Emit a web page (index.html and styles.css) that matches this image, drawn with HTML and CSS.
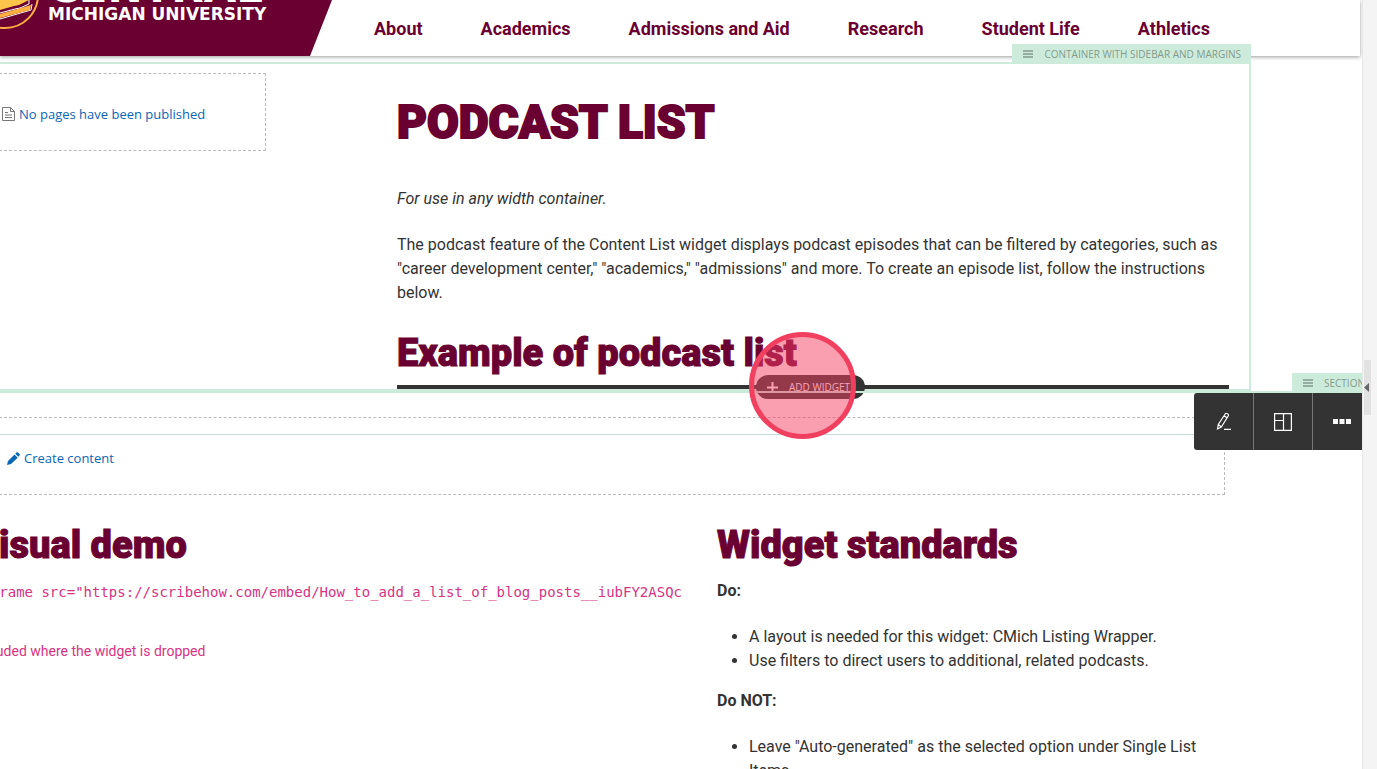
FILE: index.html
```html
<!DOCTYPE html>
<html lang="en">
<head>
<meta charset="UTF-8">
<meta name="viewport" content="width=device-width, initial-scale=1.0">
<title>Podcast List</title>
<link rel="stylesheet" href="styles.css">
</head>
<body>
<div class="page">
    <header class="site-header">
        <a class="brand" href="#">
            <svg class="seal" width="42" height="80" viewBox="0 0 42 80" aria-hidden="true">
                <circle cx="5" cy="43" r="33" fill="#6a0032" stroke="#fdb040" stroke-width="2"/>
                <path d="M0 44h29v4l-10 5-5 1L0 58z" fill="#fcc44a"/>
                <path d="M0 61l15-4 5-1 9-4V48M0 67l31-9 1-6" fill="none" stroke="#fff" stroke-width="1"/>
                <path d="M0 62l31-9-1 5L0 66z" fill="#fdb040"/>
            </svg>
            <span class="brand-name">
                <span class="brand-top">CENTRAL</span>
                <span class="brand-sub">MICHIGAN UNIVERSITY</span>
            </span>
        </a>
        <nav class="main-nav">
            <a href="#">About</a>
            <a href="#">Academics</a>
            <a href="#">Admissions and Aid</a>
            <a href="#">Research</a>
            <a href="#">Student Life</a>
            <a href="#">Athletics</a>
        </nav>
    </header>

    <div class="container">
        <div class="zone-label">
            <svg width="10" height="8" viewBox="0 0 10 8"><path d="M0 1h10M0 4h10M0 7h10" stroke="#849b8e" stroke-width="1.4"/></svg>
            CONTAINER WITH SIDEBAR AND MARGINS
        </div>
        <aside class="empty-box sidebar">
            <a href="#">
                <svg width="13" height="14" viewBox="0 0 13 14" fill="none" stroke="#777"><path d="M.5.5h8l4 4v9H.5zM8.5.5v4h4M3 5.5h3M3 8h7M3 10.5h7"/></svg>
                No pages have been published
            </a>
        </aside>
        <main class="content">
            <h1>PODCAST LIST</h1>
            <p><em>For use in any width container.</em></p>
            <p>The podcast feature of the Content List widget displays podcast episodes that can be filtered by categories, such as "career development center," "academics," "admissions" and more. To create an episode list, follow the instructions below.</p>
            <h2 class="ruled">Example of podcast list</h2>
            <button type="button" class="add-widget">
                <svg width="11" height="11" viewBox="0 0 11 11"><path d="M5.5 0v11M0 5.5h11" stroke="#fff" stroke-width="2"/></svg>
                ADD WIDGET
            </button>
            <span class="click-marker"></span>
        </main>
    </div>

    <section class="section">
        <div class="zone-label section-label">
            <svg width="10" height="8" viewBox="0 0 10 8"><path d="M0 1h10M0 4h10M0 7h10" stroke="#849b8e" stroke-width="1.4"/></svg>
            SECTION
        </div>
        <div class="toolbar">
            <button type="button" aria-label="Edit">
                <svg width="18" height="20" viewBox="0 0 18 20" fill="none" stroke="#fff" stroke-width="1.2"><path d="M2.500 17l.8-4.500L10.500 1.500c.5-.7 3.500 1 3 2L6.300 15zM3.300 12.500l3 2.500M9 3.800l3 2M9 17.400h7"/></svg>
            </button>
            <button type="button" aria-label="Layout">
                <svg width="18" height="18" viewBox="0 0 18 18" fill="none" stroke="#fff" stroke-width="1.2"><path d="M.6.6h16.800v16.800H.6zM9.500.6v16.800M.6 7.500h8.900"/></svg>
            </button>
            <button type="button" aria-label="More">
                <svg width="18" height="5" viewBox="0 0 18 5" fill="#fff"><path d="M0 0h5v5H0zM6.500 0h5v5h-5zM13 0h5v5h-5z"/></svg>
            </button>
        </div>
        <div class="empty-box create-box">
            <div class="create-row">
                <a href="#">
                    <svg width="13" height="13" viewBox="0 0 13 13" fill="#0b66b5"><path d="M0 13l1-4 6.500-6.500 3.200 3.200L4 12zM8.300 1.700L9.500.5c.5-.5 1-.5 1.500 0l1.500 1.500c.5.5.5 1 0 1.500l-1.200 1.200z"/></svg>
                    Create content
                </a>
            </div>
        </div>

        <div class="columns">
            <div class="demo">
                <h2>Visual demo</h2>
                <code>&lt;iframe src="https://scribehow.com/embed/How_to_add_a_list_of_blog_posts__iubFY2ASQc</code>
                <p class="note">included where the widget is dropped</p>
            </div>
            <div class="standards">
                <h2>Widget standards</h2>
                <p><strong>Do:</strong></p>
                <ul>
                    <li>A layout is needed for this widget: CMich Listing Wrapper.</li>
                    <li>Use filters to direct users to additional, related podcasts.</li>
                </ul>
                <p><strong>Do NOT:</strong></p>
                <ul>
                    <li>Leave "Auto-generated" as the selected option under Single List Items.</li>
                </ul>
            </div>
        </div>
    </section>
</div>
<div class="rail">
    <button type="button" class="rail-handle" aria-label="Open panel">
        <svg width="5" height="9" viewBox="0 0 5 9"><path d="M5 0v9L0 4.500z" fill="#666"/></svg>
    </button>
</div>
</body>
</html>
```

FILE: styles.css
```css
* {
    box-sizing: border-box;
}
body {
    margin: 0;
    height: 100vh;
    display: flex;
    overflow: hidden;
    background: #fff;
    color: #333;
    font: 16px/24px Roboto, sans-serif;
}
a {
    color: #0b66b5;
    text-decoration: none;
}
button {
    border: 0;
    padding: 0;
    font: inherit;
    cursor: pointer;
}
svg {
    flex: none;
}
.page {
    flex: 1;
    min-width: 0;
    height: 100vh;
    overflow: hidden;
}

/* Header */
.site-header {
    display: flex;
    align-items: stretch;
    height: 56px;
    margin-right: 2px;
    background: #fff;
    box-shadow: 0 1px 4px rgba(0,0,0,0.4);
}
.brand {
    display: flex;
    align-items: flex-end;
    width: 332px;
    overflow: hidden;
    background: #6a0032;
    clip-path: polygon(0 0, 100% 0, 310px 100%, 0 100%);
    color: #fff;
}
.seal {
    margin-bottom: 24px;
}
.brand-name {
    display: flex;
    flex-direction: column;
    margin: 0 0 32px 6px;
    font-family: "DejaVu Sans", sans-serif;
    font-weight: 700;
}
.brand-top {
    font-size: 42px;
    line-height: 32px;
}
.brand-sub {
    font-size: 17px;
    line-height: 20px;
    white-space: nowrap;
}
.main-nav {
    flex: 1;
    display: flex;
    justify-content: space-between;
    align-items: center;
    padding: 2px 150px 0 42px;
}
.main-nav a {
    color: #6a0032;
    font-size: 18px;
    font-weight: 700;
}

/* Editing zones */
.container {
    position: relative;
    display: flex;
    align-items: flex-start;
    gap: 131px;
    margin: 6px 111px 0 -26px;
    padding-right: 20px;
    border: 2px solid #cdebdb;
    border-left: 0;
}
.zone-label {
    position: absolute;
    right: -2px;
    bottom: 100%;
    display: flex;
    align-items: center;
    gap: 11px;
    height: 20px;
    padding: 0 10px 0 11px;
    background: #cdebdb;
    color: #849b8e;
    font: 10px/20px "Open Sans", sans-serif;
    white-space: nowrap;
}
.empty-box {
    height: 78px;
    border: 1px dashed #bbb;
    font: 13px/20px "Open Sans", sans-serif;
}
.empty-box a {
    display: flex;
    align-items: center;
    gap: 4px;
}
.sidebar {
    flex: 0 0 292px;
    margin-top: 9px;
    padding: 30px 0 0 27px;
}
.content {
    position: relative;
    flex: 1;
    padding-top: 26px;
}

/* Text */
h1, h2 {
    margin: 0;
    color: #6a0032;
    font-family: Roboto, sans-serif;
    font-weight: 900;
    -webkit-text-stroke: 1px #6a0032;
}
h1 {
    margin-bottom: 33px;
    font-size: 46px;
    line-height: 64px;
    -webkit-text-stroke-width: 2px;
}
h2 {
    font-size: 38px;
    line-height: 52px;
}
p {
    margin: 0 0 22px;
}
.ruled {
    padding-bottom: 6px;
    border-bottom: 4px solid #333;
}
.add-widget {
    position: absolute;
    left: 359px;
    bottom: -10px;
    display: flex;
    align-items: center;
    justify-content: flex-start;
    gap: 11px;
    width: 109px;
    height: 24px;
    padding-left: 11px;
    border-radius: 12px;
    background: #333;
    color: #fff;
    font: 10px/24px "Open Sans", sans-serif;
    white-space: nowrap;
}
.click-marker {
    position: absolute;
    z-index: 3;
    left: 352px;
    bottom: -50px;
    width: 107px;
    height: 107px;
    border: 5px solid #f13f60;
    border-radius: 50%;
    background: rgba(246,64,98,0.5);
}

/* Section */
.section {
    position: relative;
    border-top: 2px solid #cdebdb;
}
.section-label {
    right: 0;
    padding-right: 0;
    width: 70px;
    overflow: hidden;
}
.toolbar {
    position: absolute;
    top: 0;
    right: 0;
    display: flex;
    width: 168px;
    height: 57px;
    overflow: hidden;
    border-radius: 3px 0 0 3px;
    background: #333;
}
.toolbar button {
    flex: 0 0 59px;
    display: flex;
    align-items: center;
    justify-content: center;
    background: none;
}
.toolbar button + button {
    border-left: 1px solid #777;
}
.create-box {
    margin: 24px 137px 24px -26px;
    padding-top: 16px;
}
.create-row {
    padding: 13px 0 0 32px;
    border-top: 1px solid #c6d9dd;
}
.columns {
    display: grid;
    grid-template-columns: minmax(0, 1fr) 508px;
    gap: 24px;
    margin: 0 137px 0 -26px;
}
.demo {
    overflow: hidden;
}
code {
    display: block;
    margin: 9px 0 35px;
    color: #d63384;
    font: 14px/24px "DejaVu Sans Mono", monospace;
    white-space: nowrap;
}
.note {
    color: #d63384;
    font-size: 14px;
}
.standards p {
    margin-top: 8px;
}
.standards ul {
    margin: 0 0 16px;
    padding-left: 32px;
}
.standards ul + p {
    margin-top: 0;
}

/* Right rail */
.rail {
    flex: 0 0 15px;
    padding: 360px 0 0 1px;
    border-left: 1px solid #e8e8e8;
    background: #f4f4f4;
}
.rail-handle {
    display: flex;
    align-items: center;
    width: 7px;
    height: 55px;
    background: #e2e2e2;
}
```
